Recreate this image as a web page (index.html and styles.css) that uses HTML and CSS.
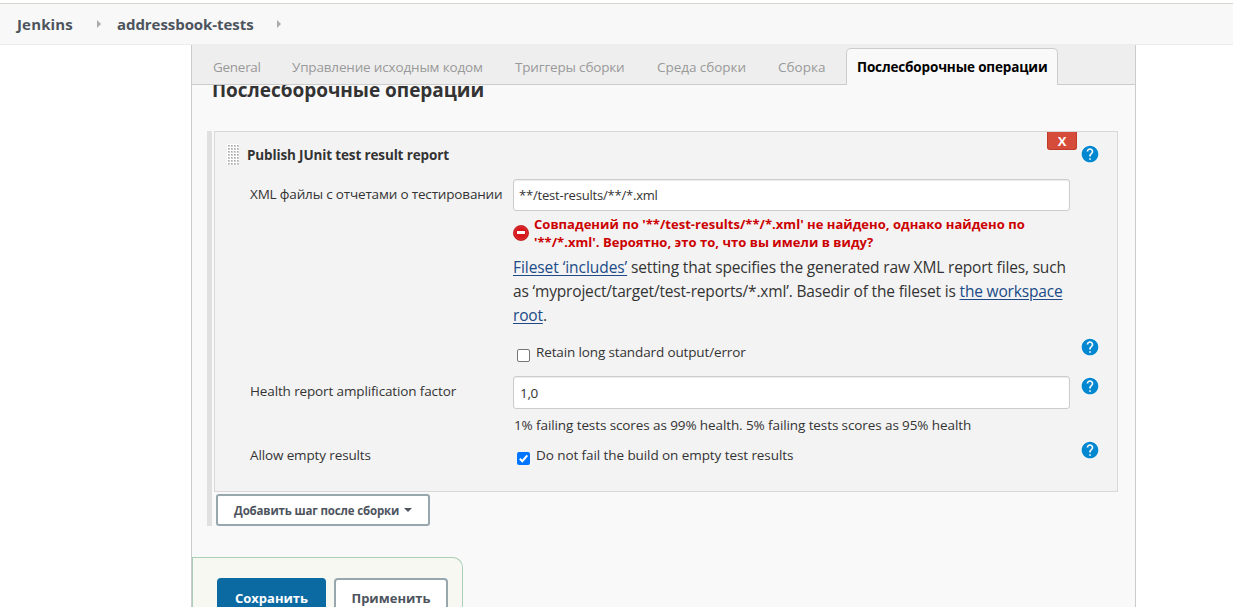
FILE: index.html
```html
<!DOCTYPE html>
<html lang="ru">
<head>
<meta charset="utf-8">
<title>addressbook-tests Config [Jenkins]</title>
<link rel="stylesheet" href="styles.css">
</head>
<body>
<svg class="defs" width="0" height="0">
  <symbol id="help" viewBox="0 0 24 24">
    <circle cx="12" cy="12" r="11" fill="#fff" opacity=".6"/>
    <path fill="#0288d1" d="M12 2C6.480 2 2 6.480 2 12s4.480 10 10 10 10-4.480 10-10S17.520 2 12 2zm1 17h-2v-2h2v2zm2.070-7.750l-.9.920C13.450 12.900 13 13.500 13 15h-2v-.5c0-1.100.450-2.100 1.170-2.830l1.240-1.260c.370-.360.590-.860.590-1.410 0-1.100-.9-2-2-2s-2 .9-2 2H8c0-2.210 1.790-4 4-4s4 1.790 4 4c0 .880-.360 1.680-.930 2.250z"/>
  </symbol>
</svg>
<nav class="crumbs">
  <a class="crumb c1">Jenkins</a><i class="arrow"></i>
  <a class="crumb c2">addressbook-tests</a><i class="arrow last"></i>
</nav>
<main class="panel">
  <div class="tabs">
    <a class="tab t1">General</a>
    <a class="tab t2">Управление исходным кодом</a>
    <a class="tab t3">Триггеры сборки</a>
    <a class="tab t4">Среда сборки</a>
    <a class="tab t5">Сборка</a>
    <a class="tab active">Послесборочные операции</a>
  </div>
  <div class="heading-clip"><h2 class="heading">Послесборочные операции</h2></div>
  <section class="steps">
    <div class="card">
      <header class="card-head">
        <svg class="grip" width="12" height="21">
          <defs><pattern id="dots" width="3" height="3" patternUnits="userSpaceOnUse"><rect width="3" height="3" fill="#fff"/><path d="M1 1h2v2H1z" fill="#ccc"/><path d="M1 1h1v1H1z" fill="#aaa"/></pattern></defs>
          <rect width="12" height="21" fill="url(#dots)"/>
        </svg>
        <b class="card-title">Publish JUnit test result report</b>
        <button class="remove">X</button>
        <svg class="help"><use href="#help"/></svg>
      </header>
      <div class="row r1">
        <label class="label l1">XML файлы с отчетами о тестировании</label>
        <div class="field">
          <div class="input in1">**/test-results/**/*.xml</div>
          <div class="error">
            <svg class="stop" width="16" height="16" viewBox="0 0 16 16"><circle cx="8" cy="8" r="7.600" fill="#c40d12" stroke="#b00" stroke-width=".6"/><circle cx="8" cy="8" r="6.300" fill="#d8171c" stroke="#e85555" stroke-width=".6"/><rect x="4" y="6" width="8" height="3" fill="#fff"/></svg>
            <p class="error-text">Совпадений по '**/test-results/**/*.xml' не найдено, однако найдено по<br>'**/*.xml'. Вероятно, это то, что вы имели в виду?</p>
          </div>
          <p class="note"><a class="loose">Fileset ‘includes’</a> setting that specifies the generated raw XML report files, such<br><span class="tight">as ‘myproject/target/test-reports/*.xml’. Basedir of the fileset is <a>the workspace</a></span><br><a>root</a>.</p>
        </div>
      </div>
      <div class="row r2">
        <div class="label"></div>
        <div class="field check"><i class="box"></i><span class="k1">Retain long standard output/error</span></div>
        <svg class="help"><use href="#help"/></svg>
      </div>
      <div class="row r3">
        <label class="label">Health report amplification factor</label>
        <div class="field">
          <div class="input in2">1,0</div>
          <p class="desc">1% failing tests scores as 99% health. 5% failing tests scores as 95% health</p>
        </div>
        <svg class="help"><use href="#help"/></svg>
      </div>
      <div class="row r4">
        <label class="label">Allow empty results</label>
        <div class="field check"><i class="box on"><svg width="13" height="13" viewBox="0 0 13 13"><path d="M2.800 6.700l2.500 2.500 5-5.900" fill="none" stroke="#fff" stroke-width="2"/></svg></i><span class="k2">Do not fail the build on empty test results</span></div>
        <svg class="help"><use href="#help"/></svg>
      </div>
    </div>
    <button class="add">Добавить шаг после сборки<i class="caret"></i></button>
  </section>
  <footer class="actions">
    <button class="save">Сохранить</button>
    <button class="apply">Применить</button>
  </footer>
</main>
</body>
</html>
```
FILE: styles.css
```css
* { box-sizing: border-box; }
body { margin: 0; height: 607px; overflow: hidden; background: #fff; color: #333; font: 13.5px/18px "Open Sans", "Noto Sans", sans-serif; white-space: nowrap; }
p, h2 { margin: 0; }
button { font-family: inherit; padding: 0; }
.defs { position: absolute; }
.crumbs { display: flex; align-items: center; height: 42px; margin-top: 3px; padding-left: 17px; background: #f8f8f8; border-top: 1px solid #d3d7cf; border-bottom: 1px solid #eceeee; color: #4d545d; font-weight: 700; font-size: 15px; }
.c1 { width: 80px; letter-spacing: .15px; }
.c2 { width: 160px; letter-spacing: -.06px; }
.arrow { width: 0; height: 0; border: 4px solid transparent; border-left-color: #aaa; border-right: 0; margin-right: 16px; }
.panel { display: flex; flex-direction: column; width: 945px; height: 562px; margin-left: 191px; background: #f9f9f9; border: solid #ccc; border-width: 0 1px; }
.panel > * { flex-shrink: 0; }
.tabs { display: flex; height: 40px; background: #eee; border-bottom: 1px solid #ccc; padding: 3px 0 0 21px; color: #999; }
.tab { padding-top: 10px; height: 37px; }
.t1 { width: 79px; letter-spacing: -.28px; }
.t2 { width: 223px; letter-spacing: -.17px; }
.t3 { width: 142px; letter-spacing: -.17px; }
.t4 { width: 121px; letter-spacing: -.05px; }
.t5 { width: 68px; }
.active { width: 212px; background: #f9f9f9; border: 1px solid #ccc; border-bottom: 0; border-radius: 5px 5px 0 0; padding: 9px 0 0 10px; color: #000; font-weight: 700; letter-spacing: -.15px; }
.heading-clip { height: 46px; overflow: hidden; padding-left: 20px; }
.heading { font-size: 19px; line-height: 26px; margin-top: -8px; letter-spacing: -.04px; }
.steps { display: flex; flex-direction: column; align-items: flex-start; gap: 2px; margin-left: 15px; height: 395px; width: 911px; border-left: 5px solid #e0e0e0; padding-left: 2px; }
.card { width: 904px; height: 361px; background: #f3f3f3; border: 1px solid #d8d8d8; }
.card-head { display: flex; height: 47px; padding-left: 12px; }
.grip { margin: 12px 8px 0 0; }
.card-title { width: 800px; padding-top: 14px; letter-spacing: -.14px; }
.remove { width: 30px; height: 18px; background: #d54c3a; border: 1px solid #c03a29; border-top: 0; border-radius: 0 0 3px 3px; color: #fff; font: 700 13px/18px "Open Sans", sans-serif; }
.help { width: 20px; height: 20px; }
.card-head .help { margin: 12px 0 0 3px; }
.row { display: flex; padding-left: 35px; }
.row .label { width: 263px; letter-spacing: -.13px; }
.row .l1 { letter-spacing: -.165px; }
.row .field { width: 557px; }
.row .help { margin-left: 10px; }
.r1 { height: 158px; }
.r2 { height: 39px; }
.r3 { height: 64px; }
.label { padding-top: 6px; }
.input { height: 32px; background: #fff; border: 1px solid #ccc; border-radius: 3px; box-shadow: inset 0 1px 1px rgba(0,0,0,.08); padding: 6px 0 0 5px; }
.in1 { font-size: 13px; letter-spacing: -.2px; }
.error { display: flex; align-items: center; gap: 5px; height: 36px; margin-top: 4px; color: #c00; font-weight: 700; font-size: 13px; letter-spacing: .03px; }
.note { font-size: 15.5px; line-height: 24px; margin-top: 4px; letter-spacing: -.16px; }
.loose { letter-spacing: -.06px; }
.tight { letter-spacing: -.17px; }
.note a { color: #204a87; text-decoration: underline; text-underline-offset: 2px; }
.check { display: flex; gap: 6px; padding: 6px 0 0 4px; }
.k1 { letter-spacing: -.13px; }
.k2 { letter-spacing: -.08px; }
.box { width: 13px; height: 13px; margin-top: 6px; background: #fff; border: 1px solid #767676; border-radius: 2px; }
.box.on { background: #0075ff; border: 0; }
.box svg { display: block; }
.in2 { height: 33px; padding: 7px 0 0 6px; letter-spacing: -.3px; }
.desc { margin: 7px 0 0 1px; letter-spacing: -.1px; }
.add { display: flex; align-items: center; width: 214px; height: 32px; margin-left: 2px; padding: 1px 0 0 16px; background: #fff; border: 2px solid #98a6ad; border-radius: 3px; color: #4d545d; font-weight: 700; font-size: 11.5px; letter-spacing: -.16px; }
.caret { margin: -2px 0 0 5px; border: 4px solid transparent; border-top-color: #4d545d; border-bottom: 0; }
.actions { display: flex; align-items: flex-start; gap: 8px; width: 271px; height: 60px; margin-top: 31px; padding: 20px 0 0 24px; background: #f6f8f1; border: 1px solid #a9cfb8; border-bottom: 0; border-radius: 0 10px 0 0; }
.actions button { height: 39px; border-radius: 4px; font-weight: 700; font-size: 13px; }
.save { width: 109px; background: #0b6aa2; border: 0; color: #fff; }
.apply { width: 114px; background: #fff; border: 2px solid #98a6ad; color: #4d545d; }
```
